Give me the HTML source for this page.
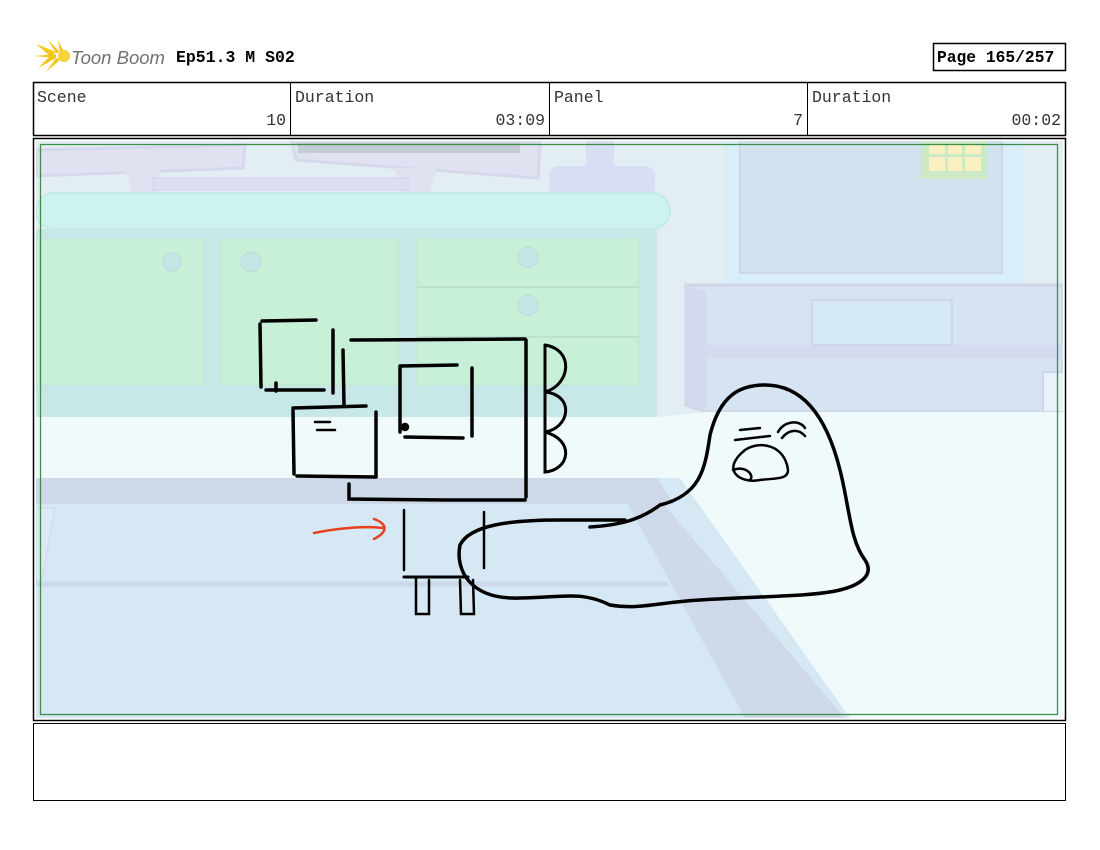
<!DOCTYPE html>
<html><head><meta charset="utf-8"><style>
body{margin:0;width:1100px;height:850px;background:#fff;position:relative;overflow:hidden;font-family:"Liberation Mono",monospace}
.a{position:absolute}
</style></head><body>
<svg class="a" style="left:0;top:0" width="1100" height="850" viewBox="0 0 1100 850">
<!-- logo -->
<g fill="#f5c518">
<path d="M36 44 L56 52 L50 56Z"/><path d="M38 68 L56 58 L52 54Z"/><path d="M48 40 L60 52 L56 53Z"/><path d="M46 72 L60 60 L56 58Z"/><path d="M58 40 L64 52 L60 52Z"/><path d="M34 56 L56 54 L56 58Z"/>
<circle cx="64" cy="56" r="6" fill="#f7d23a"/>
</g>
<text x="71" y="64" font-family="Liberation Sans" font-style="italic" font-size="18.5" fill="#707070">Toon Boom</text>
<text x="176" y="62" font-family="Liberation Mono" font-weight="bold" font-size="16.5" fill="#000">Ep51.3 M S02</text>
<rect x="933.5" y="43.5" width="132" height="27" fill="#fff" stroke="#000" stroke-width="1.5"/>
<text x="937" y="62" font-family="Liberation Mono" font-weight="bold" font-size="16.3" fill="#000">Page 165/257</text>
<!-- header table -->
<rect x="33.5" y="82.5" width="1032" height="53" fill="#fff" stroke="#000" stroke-width="1.5"/>
<line x1="290.5" y1="83" x2="290.5" y2="135" stroke="#000"/>
<line x1="549.5" y1="83" x2="549.5" y2="135" stroke="#000"/>
<line x1="807.5" y1="83" x2="807.5" y2="135" stroke="#000"/>
<g font-family="Liberation Mono" font-size="16.5" fill="#333">
<text x="37" y="102">Scene</text><text x="286" y="125" text-anchor="end">10</text>
<text x="295" y="102">Duration</text><text x="545" y="125" text-anchor="end">03:09</text>
<text x="554" y="102">Panel</text><text x="803" y="125" text-anchor="end">7</text>
<text x="812" y="102">Duration</text><text x="1061" y="125" text-anchor="end">00:02</text>
</g>
<!-- frame -->
<rect x="33.5" y="138.5" width="1032" height="582" fill="#fff" stroke="#000" stroke-width="1.5"/>
<clipPath id="c"><rect x="36" y="141" width="1027" height="577"/></clipPath>
<g clip-path="url(#c)">
<rect x="36" y="141" width="1027" height="577" fill="#e3eef4"/>
<!-- monitors -->
<path d="M36 150 L245 145 L243 168 L36 176Z" fill="#e0e2f2" stroke="#d6d8ec" stroke-width="3"/>
<path d="M292 143 L540 143 L538 178 L296 160Z" fill="#e0e2f2" stroke="#d6d8ec" stroke-width="3"/>
<rect x="298" y="143" width="222" height="10" fill="#c4ccd6"/>
<path d="M125 168 L160 168 L160 192 L132 192Z" fill="#e0e2f2"/>
<path d="M395 168 L437 168 L430 192 L400 192Z" fill="#e0e2f2"/>
<rect x="153" y="178" width="255" height="12" fill="#dcdff0" stroke="#d0d4ea"/>
<rect x="586" y="141" width="28" height="30" fill="#d8def4"/>
<rect x="549" y="166" width="106" height="30" rx="10" fill="#d8def4"/>
<!-- counter -->
<rect x="36" y="193" width="634" height="36" rx="18" fill="#cdf3ee" stroke="#c4ebe8" stroke-width="2"/>
<rect x="36" y="229" width="621" height="188" fill="#c8e8e8"/>
<rect x="36" y="239" width="168" height="146" fill="#c8efd8" stroke="#bfe6cf"/>
<rect x="221" y="239" width="177" height="146" fill="#c8efd8" stroke="#bfe6cf"/>
<rect x="417" y="239" width="222" height="146" fill="#c8efd8" stroke="#bfe6cf"/>
<line x1="417" y1="287" x2="639" y2="287" stroke="#bde1cf" stroke-width="2"/>
<line x1="417" y1="337" x2="639" y2="337" stroke="#bde1cf" stroke-width="2"/>
<g fill="#c6e6e6" stroke="#b8dcdc"><circle cx="172" cy="262" r="9"/><circle cx="251" cy="262" r="10"/><circle cx="528" cy="257" r="10"/><circle cx="528" cy="305" r="10"/></g>
<!-- tv / window -->
<rect x="724" y="141" width="298" height="143" fill="#d8eef8"/>
<rect x="740" y="141" width="262" height="132" fill="#d3e2ef" stroke="#cdd5ea" stroke-width="2"/>
<rect x="921" y="141" width="66" height="38" fill="#cceac6"/>
<g fill="#fbf0c0"><rect x="929" y="144" width="16" height="10"/><rect x="948" y="144" width="14" height="10"/><rect x="965" y="144" width="16" height="10"/><rect x="929" y="157" width="16" height="14"/><rect x="948" y="157" width="14" height="14"/><rect x="965" y="157" width="16" height="14"/></g>
<!-- TV stand -->
<path d="M686 285 L1063 285 L1063 412 L706 412 L686 405Z" fill="#d5e4f0" stroke="#d1d5ea" stroke-width="3"/>
<path d="M686 285 L706 292 L706 412 L686 405Z" fill="#d4d9ee"/>
<rect x="706" y="345" width="357" height="13" fill="#d6daef"/>
<rect x="812" y="300" width="140" height="45" fill="#d4e8f6" stroke="#d1d5ea" stroke-width="2"/>
<rect x="1043" y="372" width="22" height="40" fill="#e8f2f8" stroke="#d1d5ea" stroke-width="2"/>
<!-- floor -->
<path d="M36 417 L657 417 L706 412 L1063 412 L1063 718 L36 718Z" fill="#f1fafb"/>
<path d="M36 478 L680 478 L850 718 L36 718Z" fill="#d5e8f4"/>
<path d="M36 478 L657 478 L674 504 L36 504Z" fill="#cdd8e8"/>
<path d="M622 494 L655 494 L845 718 L745 718Z" fill="#cdd8e8" opacity=".9"/>
<path d="M36 584 L668 584" stroke="#cdd8e8" stroke-width="5"/>
<path d="M36 508 L55 508 L42 580 L36 580Z" fill="#dde9f5" stroke="#cdd8e8"/>
</g>
<rect x="40.5" y="144.5" width="1017" height="570" fill="none" stroke="#3f8f4a" stroke-width="1.3"/>
<!-- sketch -->
<g fill="none" stroke="#000" stroke-linecap="round" stroke-width="3.5">
<path d="M262 321 L316 320"/><path d="M260 324 L261 387"/><path d="M266 390 L324 390 M276 383 L276 391"/><path d="M333 330 L333 393"/>
<path d="M351 340 L525 339"/><path d="M526 340 L526 497"/><path d="M343 350 L344 405"/>
<path d="M400 366 L457 365"/><path d="M400 368 L400 432"/><path d="M472 368 L472 436"/><path d="M405 437 L463 438"/><circle cx="405" cy="427" r="2.5" fill="#000"/>
<path d="M293 408 L366 406"/><path d="M293 410 L294 474"/><path d="M376 412 L376 477"/><path d="M297 476 L375 477"/>
<path d="M315 422 L330 422 M317 430 L335 430" stroke-width="2.5"/>
<path d="M349 484 L349 499 L445 500 L525 500"/>
<path d="M545 345 C575 350 570 385 545 392 C575 395 570 428 545 432 C575 440 570 470 545 472 L545 345" stroke-width="3"/>
<path d="M404 510 L404 570 M484 512 L484 568" stroke-width="2.5"/>
<path d="M404 577 L468 577" stroke-width="3"/>
<path d="M416 578 L416 614 L429 614 L429 580 M460 580 L461 614 L474 614 L473 580" stroke-width="2.5"/>
<path d="M590 527 C620 525 640 520 660 505 C700 495 705 470 710 435 C720 395 740 385 765 385 C810 385 830 430 840 470 C850 510 850 540 865 560 C875 575 860 585 840 590 C810 597 760 596 700 600 C660 602 640 610 610 605 C580 590 560 598 520 598 C470 600 455 570 460 545 C470 525 510 520 560 520 L625 520" stroke-width="3.5"/>
<path d="M740 430 L760 428 M735 440 L770 436 M778 432 C785 420 800 420 805 428 M782 438 C788 430 798 428 805 436" stroke-width="2.5"/>
<path d="M745 450 C760 440 785 445 788 470 C788 480 775 478 760 480 C740 484 720 470 745 450 M733 470 C745 465 755 475 750 480" stroke-width="2.5"/>
</g>
<path d="M314 533 C340 528 365 526 383 528 M374 519 C388 524 388 532 374 539" fill="none" stroke="#e8401c" stroke-width="2.5" stroke-linecap="round"/>
<!-- bottom box -->
<rect x="33.5" y="723.5" width="1032" height="77" fill="#fff" stroke="#000" stroke-width="1"/>
</svg>
</body></html>
